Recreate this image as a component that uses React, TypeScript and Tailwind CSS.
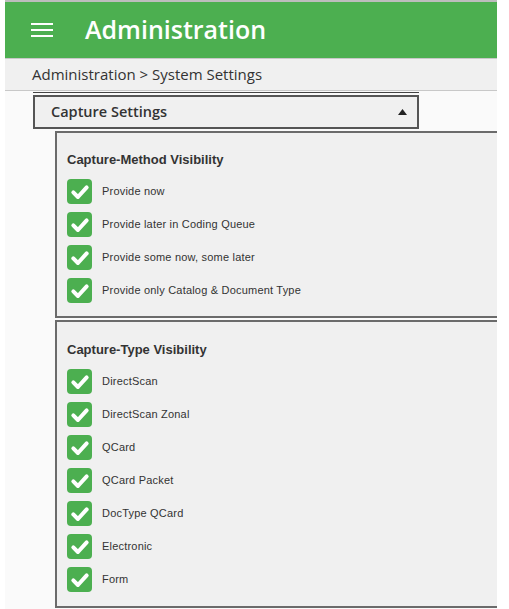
import React from "react";

const METHODS = [
  "Provide now",
  "Provide later in Coding Queue",
  "Provide some now, some later",
  "Provide only Catalog & Document Type",
];

const TYPES = [
  "DirectScan",
  "DirectScan Zonal",
  "QCard",
  "QCard Packet",
  "DocType QCard",
  "Electronic",
  "Form",
];

function CheckBox() {
  return (
    <span className="flex h-[25px] w-[25px] shrink-0 items-center justify-center rounded-[4px] bg-[#4caf50]">
      <svg viewBox="0 0 24 24" className="h-[20px] w-[20px]">
        <path d="M4 12.5 L9.5 18 L20 6.5" fill="none" stroke="#fff" strokeWidth="4.8" strokeLinecap="round" strokeLinejoin="round" />
      </svg>
    </span>
  );
}

function Section({ title, items, className }: { title: string; items: string[]; className?: string }) {
  return (
    <div className={`border-2 border-r-0 border-[#6b6b6b] bg-[#f0f0f0] pl-[10px] ${className ?? ""}`}>
      <h3 className="text-[13px] font-bold leading-[18px] text-[#333]">{title}</h3>
      <div className="mt-[10px] flex flex-col gap-[8px]">
        {items.map((item) => (
          <label key={item} className="flex items-center gap-[10px]">
            <CheckBox />
            <span className="text-[11px] tracking-[0.2px] text-[#333]">{item}</span>
          </label>
        ))}
      </div>
    </div>
  );
}

export default function App() {
  return (
    <div className="h-[609px] w-[509px] overflow-hidden bg-white" style={{ fontFamily: '"Liberation Sans", Arial, sans-serif' }}>
      <div className="ml-[5px] w-[492px] border-t-2 border-[#bdbdbd] bg-[#fafafa]">
        {/* Top bar */}
        <header className="flex h-[56px] items-center bg-[#4caf50] pl-[26px] text-white">
          <svg width="22" height="14" viewBox="0 0 22 14" className="shrink-0">
            <rect x="0" y="0" width="22" height="2" fill="#fff" />
            <rect x="0" y="6" width="22" height="2" fill="#fff" />
            <rect x="0" y="12" width="22" height="2" fill="#fff" />
          </svg>
          <h1 className="ml-[32px] text-[25px] font-semibold" style={{ fontFamily: '"Open Sans", sans-serif' }}>
            Administration
          </h1>
        </header>

        {/* Breadcrumb */}
        <div
          className="flex h-[33px] items-center border-y border-[#c8c8c8] bg-[#f0f0f0] pl-[27px] text-[15px] text-[#333]"
          style={{ fontFamily: '"Open Sans", sans-serif' }}
        >
          Administration &gt; System Settings
        </div>

        <div className="pb-4">
          <div className="ml-[28px] mt-[1px] w-[386px] border-t border-[#444]" />
          {/* Panel header */}
          <div className="ml-[28px] mt-[2px] flex h-[34px] w-[386px] items-center justify-between border-2 border-[#555] bg-[#f0f0f0] pl-[16px] pr-[10px]">
            <span className="text-[14.5px] font-semibold text-[#333]" style={{ fontFamily: '"Open Sans", sans-serif' }}>
              Capture Settings
            </span>
            <svg width="9" height="6" viewBox="0 0 9 6">
              <path d="M0 6 L4.5 0 L9 6 Z" fill="#222" />
            </svg>
          </div>

          <div className="ml-[50px] mt-[2px]">
            <Section title="Capture-Method Visibility" items={METHODS} className="pb-[13px] pt-[18px]" />
            <Section title="Capture-Type Visibility" items={TYPES} className="mt-[2px] pb-[14px] pt-[19px]" />
          </div>
        </div>
      </div>
    </div>
  );
}
